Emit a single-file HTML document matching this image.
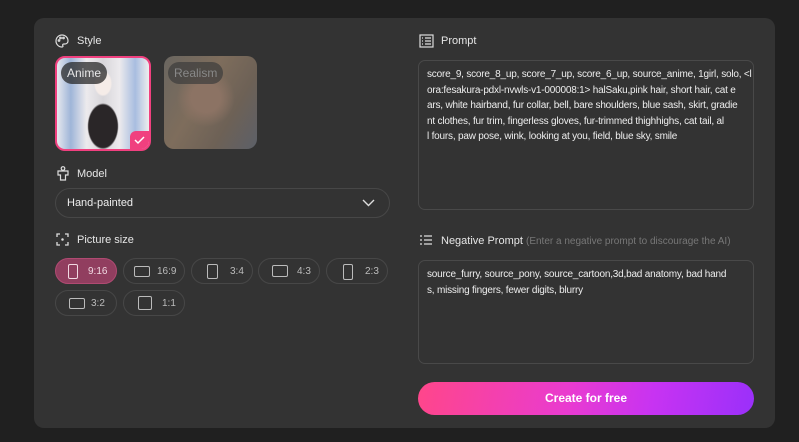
<!DOCTYPE html>
<html><head><meta charset="utf-8"><style>
*{box-sizing:border-box;margin:0;padding:0}
body{width:799px;height:442px;background:#202020;font-family:"Liberation Sans",sans-serif;position:relative;overflow:hidden;color:#e8e8e8}
.card{position:absolute;left:34px;top:18px;width:741px;height:410px;background:#333;border-radius:10px}
.abs{position:absolute}
.lbl{font-size:11px;color:#e6e6e6}
.ic{position:absolute}
.thumb{position:absolute;border-radius:10px;overflow:hidden}
.tag{position:absolute;left:4px;top:6px;height:22px;padding:0 6px;border-radius:11px;background:rgba(40,40,40,.75);font-size:12px;line-height:22px}
.dd{position:absolute;left:55px;top:188px;width:335px;height:30px;border:1px solid #474747;border-radius:15px;font-size:11px;line-height:28px;padding-left:11px;color:#eee}
.sz{position:absolute;height:26px;width:62px;border:1px solid #474747;border-radius:13px;font-size:10px;color:#bbb;line-height:24px}
.sz span{position:absolute;left:38px;top:1px}
.sz i{position:absolute;border:1.3px solid #bbb;border-radius:2px}
.ta{position:absolute;left:418px;width:336px;border:1px solid #494949;border-radius:7px;font-size:10px;letter-spacing:-0.2px;line-height:15.5px;color:#eee;padding:6px 4px 0 8px;white-space:nowrap;overflow:hidden}
.btn{position:absolute;left:418px;top:382px;width:336px;height:33px;border-radius:17px;background:linear-gradient(100deg,#ff468a 0%,#e93bd0 45%,#c733f2 70%,#9a30fa 100%);color:#fff;font-size:12px;font-weight:bold;text-align:center;line-height:33px}
</style></head><body>
<div class="card"></div>

<svg class="ic" style="left:55px;top:34px" width="14" height="14" viewBox="0 0 14 14" fill="none" stroke="#ddd" stroke-width="1.2"><path d="M7 1a6 6 0 0 0 0 12c1 0 1.2-.8.8-1.4-.5-.7 0-1.6.9-1.6H10a3 3 0 0 0 3-3C13 3.6 10.3 1 7 1z"/><circle cx="4" cy="6.5" r=".8"/><circle cx="5.5" cy="4" r=".8"/><circle cx="8.5" cy="4" r=".8"/></svg>
<div class="abs lbl" style="left:77px;top:35px">Style</div>

<div class="thumb" style="left:55px;top:56px;width:96px;height:95px;border:2px solid #f0407f;background:radial-gradient(ellipse at 50% 28%,#f5ece8 0 12%,transparent 14%),radial-gradient(ellipse at 50% 75%,#2a2628 0 22%,transparent 24%),linear-gradient(90deg,#e6e8ee 0%,#9fb5d8 15%,#eceaed 32%,#d8d6da 50%,#eceaed 68%,#a8bde0 85%,#eee 100%)">
<div class="tag" style="left:4px;top:4px">Anime</div>
<div class="abs" style="right:0;bottom:0;width:19px;height:18px;background:#f0407f;border-top-left-radius:6px"><svg width="19" height="18"><path d="M5 9l3 3 6-6" stroke="#fff" stroke-width="1.5" fill="none"/></svg></div>
</div>
<div class="thumb" style="left:164px;top:56px;width:93px;height:93px;background:radial-gradient(circle at 45% 45%,#8c7364 0 20%,transparent 40%),linear-gradient(120deg,#6a6660 0%,#7e6d5c 40%,#6d6156 70%,#5c6068 100%)">
<div class="tag" style="left:4px;top:6px;color:#888;background:rgba(60,60,60,.7)">Realism</div>
</div>

<svg class="ic" style="left:57px;top:166px" width="12" height="15" viewBox="0 0 12 15" fill="none" stroke="#ddd" stroke-width="1.2"><circle cx="6" cy="2.5" r="1.8"/><path d="M1 5h10v4H8.5v5h-5V9H1z"/></svg>
<div class="abs lbl" style="left:77px;top:168px">Model</div>
<div class="dd">Hand-painted<svg class="abs" style="right:14px;top:10px" width="13" height="8"><path d="M1 1l5.5 5.5L12 1" stroke="#ddd" stroke-width="1.4" fill="none"/></svg></div>

<svg class="ic" style="left:56px;top:233px" width="13" height="13" viewBox="0 0 13 13" fill="none" stroke="#ddd" stroke-width="1.3"><path d="M1 4V1h3M9 1h3v3M12 9v3H9M4 12H1V9"/><circle cx="6.5" cy="6.5" r=".6" fill="#ddd"/></svg>
<div class="abs lbl" style="left:77px;top:234px">Picture size</div>

<div class="sz" style="left:55px;top:258px;background:#913e5f;border-color:#b04a72;color:#f1d9e2"><i style="left:12px;top:5px;width:10px;height:15px;border-color:#f1d9e2"></i><span style="left:32px">9:16</span></div>
<div class="sz" style="left:123px;top:258px"><i style="left:10px;top:7px;width:16px;height:11px"></i><span style="left:33px">16:9</span></div>
<div class="sz" style="left:191px;top:258px"><i style="left:15px;top:5px;width:11px;height:15px"></i><span>3:4</span></div>
<div class="sz" style="left:258px;top:258px"><i style="left:13px;top:6px;width:16px;height:12px"></i><span>4:3</span></div>
<div class="sz" style="left:326px;top:258px"><i style="left:16px;top:5px;width:10px;height:16px"></i><span>2:3</span></div>
<div class="sz" style="left:55px;top:290px"><i style="left:13px;top:7px;width:16px;height:11px"></i><span style="left:35px">3:2</span></div>
<div class="sz" style="left:123px;top:290px"><i style="left:14px;top:5px;width:14px;height:14px"></i><span>1:1</span></div>

<svg class="ic" style="left:419px;top:34px" width="15" height="14" viewBox="0 0 15 14" fill="none" stroke="#ddd" stroke-width="1.2"><rect x="1" y="1" width="13" height="12"/><path d="M3 4h1M6 4h6M3 7h1M6 7h6M3 10h1M6 10h6"/></svg>
<div class="abs lbl" style="left:441px;top:35px">Prompt</div>
<div class="ta" style="top:60px;height:150px">score_9, score_8_up, score_7_up, score_6_up, source_anime, 1girl, solo, &lt;l<br>ora:fesakura-pdxl-nvwls-v1-000008:1&gt; halSaku,pink hair, short hair, cat e<br>ars, white hairband, fur collar, bell, bare shoulders, blue sash, skirt, gradie<br>nt clothes, fur trim, fingerless gloves, fur-trimmed thighhighs, cat tail, al<br>l fours, paw pose, wink, looking at you, field, blue sky, smile</div>

<svg class="ic" style="left:420px;top:235px" width="12" height="10" viewBox="0 0 12 10" fill="none" stroke="#ddd" stroke-width="1.3"><path d="M0 1h2M4 1h8M0 5h2M4 5h8M0 9h2M4 9h8"/></svg>
<div class="abs lbl" style="left:441px;top:235px">Negative Prompt <span style="color:#777;font-size:10px">(Enter a negative prompt to discourage the AI)</span></div>
<div class="ta" style="top:260px;height:104px">source_furry, source_pony, source_cartoon,3d,bad anatomy, bad hand<br>s, missing fingers, fewer digits, blurry</div>

<div class="btn">Create for free</div>
</body></html>
